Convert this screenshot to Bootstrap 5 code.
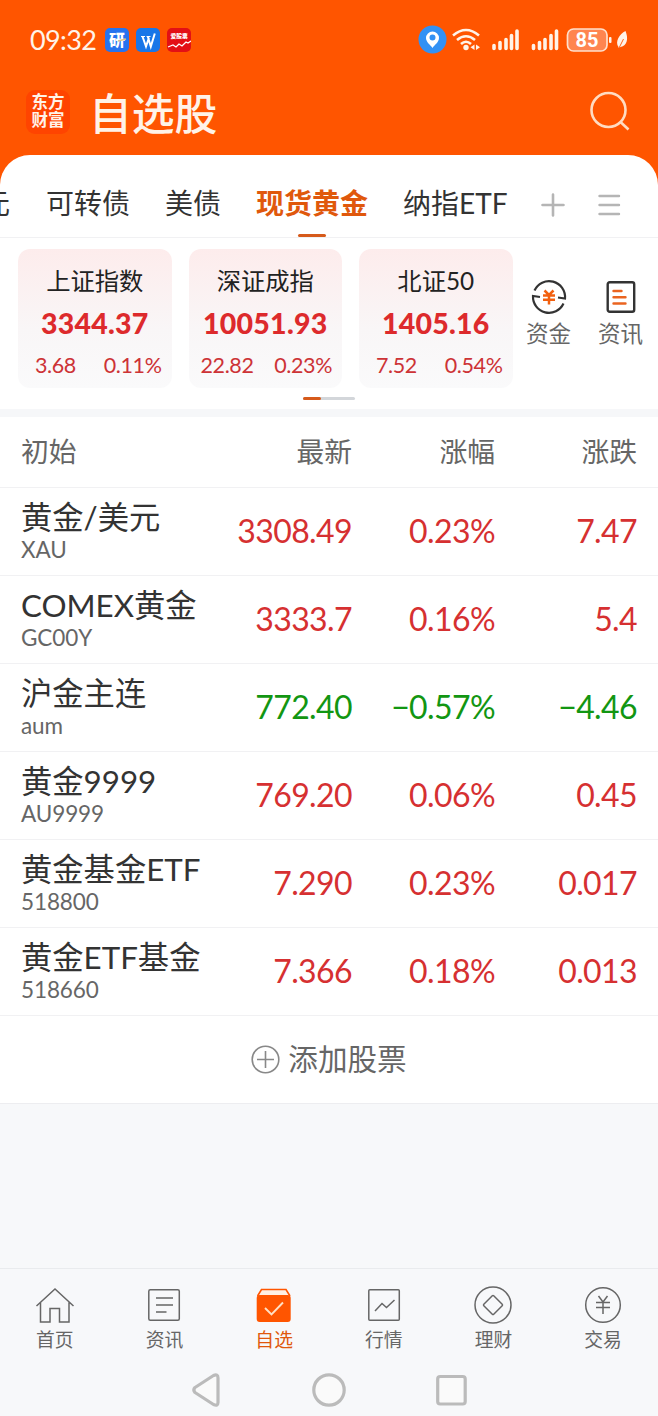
<!DOCTYPE html>
<html lang="zh-CN">
<head>
<meta charset="utf-8">
<meta name="viewport" content="width=device-width, initial-scale=1">
<title>自选股</title>
<link href="https://cdn.jsdelivr.net/npm/bootstrap@5.3.0/dist/css/bootstrap.min.css" rel="stylesheet">
<style>
  body { font-family: Lato, "Noto Sans CJK SC", sans-serif; background: #f7f8fa; color: #333; width: 658px; height: 1416px; overflow: hidden; }
  svg { display: block; flex: none; }
  .app-head { background: #ff5500; height: 189px; color: #fff3e8; }
  .status { height: 79px; padding: 0 29px 0 30px; }
  .clock { font-size: 27px; line-height: 30px; width: 75px; letter-spacing: -.6px; }
  .app-icon { width: 24px; height: 24px; border-radius: 5px; overflow: hidden; margin-right: 7px; }
  .title-row { height: 66px; padding: 0 27px 0 26px; }
  .logo { width: 44px; height: 44px; border-radius: 9px; background: #ff4400; font-size: 16.5px; line-height: 18px; font-weight: 700; text-align: center; padding-top: 3px; }
  .page-title { font-size: 42.8px; line-height: 60px; font-weight: 500; margin-left: 19px; padding-top: 4px; }
  .sheet { margin-top: -34px; border-radius: 30px 30px 0 0; background: #fff; overflow: hidden; }
  .tabs { height: 83px; border-bottom: 1px solid #f1f1f3; white-space: nowrap; font-size: 28px; line-height: 40px; padding-top: 28px; }
  .tabs .cut { width: 46px; text-indent: -18px; }
  .tabs svg { margin-top: 9px; }
  .current { color: #e0580c; font-weight: 700; }
  .current::after { content: ""; position: absolute; left: 42px; bottom: 0; width: 28px; height: 3px; border-radius: 2px; background: #d65a1b; }
  .indices { height: 171px; padding-top: 11px; }
  .quote-box { width: 153.5px; height: 139px; border-radius: 12px; margin-right: 17px; background: linear-gradient(#fdecec, #f9f6f7 58%, #fafafb); padding-top: 15px; text-align: center; }
  .q-name { font-size: 24.3px; line-height: 34px; color: #222; }
  .q-val { font-size: 28.5px; line-height: 34px; margin-top: 8px; font-weight: 900; color: #dd2a2c; letter-spacing: .25px; }
  .q-sub { font-size: 21.5px; line-height: 28px; margin-top: 11px; padding: 0 10px 0 17px; color: #cd3336; letter-spacing: -.4px; }
  .tool { width: 72px; padding-top: 30px; color: #666; font-size: 22.5px; line-height: 32px; }
  .tool svg { margin-bottom: 3px; }
  .pager { width: 52px; height: 3px; margin: 9px 0 0 303px; background: #d3d6da; border-radius: 2px; }
  .pager span { display: block; width: 18px; height: 3px; border-radius: 2px; background: #d65a1b; }
  .band { height: 8px; background: #f6f7f9; }
  .q-row { height: 88px; padding: 0 21px; border-bottom: 1px solid #f1f1f3; }
  .q-row.th { height: 71px; font-size: 27.8px; line-height: 40px; color: #666; }
  .c1 { width: 191px; }
  .c2 { width: 140px; text-align: right; }
  .c3 { width: 143px; text-align: right; }
  .c4 { width: 142px; text-align: right; }
  .stock { font-size: 31.3px; line-height: 40px; white-space: nowrap; }
  .code { font-size: 22.5px; line-height: 26px; color: #666; letter-spacing: -.1px; margin-bottom: 3px; }
  .num { font-size: 32px; line-height: 40px; color: #d63031; letter-spacing: -.6px; padding-bottom: 2px; }
  .num.down { color: #129612; }
  .add { height: 88px; border-bottom: 1px solid #ededf0; color: #666; font-size: 29.6px; line-height: 40px; padding-bottom: 1px; }
  .tabbar { margin-top: 164px; height: 84px; border-top: 1px solid #e9ebee; color: #666; font-size: 18.8px; line-height: 26px; padding-top: 16px; }
  .tabbar svg { margin: 0 0 2px; }
  .tabbar .on { color: #e0580c; }
  .sys { height: 64px; }
</style>
</head>
<body>
<header class="app-head">
  <div class="status d-flex align-items-center">
    <div class="clock">09:32</div>
    <svg class="app-icon" viewBox="0 0 24 24"><rect width="24" height="24" fill="#2673ee"/><text x="4" y="17.5" font-size="16" font-weight="900" fill="#fff">研</text><path d="M13 13l8-2" stroke="#d9c184" stroke-width="1.5"/></svg>
    <svg class="app-icon" viewBox="0 0 24 24"><rect width="24" height="24" fill="#1876e8"/><path d="M5 8.500h4M10.500 8.500h4" fill="none" stroke="#fff" stroke-width="1.200"/><path d="M6.500 8.500l3.500 10 3-9M11.800 8.500l3 10 4-13" fill="none" stroke="#fff" stroke-width="2"/></svg>
    <svg class="app-icon" viewBox="0 0 24 24"><rect width="24" height="24" fill="#e31015"/><text x="3.500" y="10" font-size="5.800" font-weight="900" fill="#fff">爱股票</text><path d="M1 19l5-2 3 2 3-3 3 2 4-4 2 1 3-2" fill="none" stroke="#fff" stroke-width="1.300"/></svg>
    <svg class="ms-auto" width="212" height="30" viewBox="417 25 212 30" fill="#fff3e8">
      <circle cx="432.500" cy="39.500" r="14" fill="#3291f4"/>
      <path fill-rule="evenodd" d="M432.500 48c-2-3-6.500-6-6.500-10a6.500 6.500 0 0 1 13 0c0 4-4.500 7-6.500 10zm0-7.500a3 3 0 1 0 0-6 3 3 0 0 0 0 6z" fill="#fff"/>
      <g fill="none" stroke="#fff3e8" stroke-width="2.600"><path d="M453 35.500q13-11 26 0M457 40q9-7.500 18 0M461 44q5-4.500 10 0"/></g>
      <circle cx="466" cy="47.500" r="2.700"/><path d="M474.500 44.500v5.500l-4-2.700zM476 44.500v5.500l4-2.700z"/>
      <g stroke="#fff3e8" stroke-width="3.600" stroke-linecap="round"><path d="M494 45.500v3M500 42.500v6M506 39.500v9M511.500 35.500v13M517 31v17.500M533.500 45.500v3M539.500 42.500v6M545 39.500v9M551 35.500v13M556.500 31v17.500"/></g>
      <rect x="567.500" y="29" width="39.500" height="22" rx="6" fill="#ff8550" stroke="#ffe0cc" stroke-width="1.700"/>
      <text x="587" y="47.300" text-anchor="middle" font-family="Roboto" font-size="20" font-weight="700" fill="#fff">85</text>
      <rect x="609" y="37" width="2.500" height="6" rx="1"/>
      <path d="M625.500 31c3 7 2 15-5 16l-2 1v-1c-4-5 1-13 7-16z"/><path d="M619 48l4.500-9" stroke="#ff5500" stroke-width=".9" fill="none"/>
    </svg>
  </div>
  <div class="title-row d-flex align-items-center">
    <div class="logo">东方<br>财富</div>
    <div class="page-title">自选股</div>
    <svg class="ms-auto" width="42" height="42" viewBox="0 0 42 42" fill="none" stroke="#ffdcc2" stroke-width="2.600"><circle cx="19.500" cy="19" r="17"/><path d="M31.500 31l8 7.500"/></svg>
  </div>
</header>
<main class="sheet position-relative">
  <nav class="tabs d-flex">
    <div class="cut">元</div>
    <div style="width:119px">可转债</div>
    <div style="width:91px">美债</div>
    <div class="current position-relative" style="width:147px">现货黄金</div>
    <div style="width:138px">纳指ETF</div>
    <svg width="24" height="26" viewBox="0 0 24 26" stroke="#b5b5b5" stroke-width="2.600" stroke-linecap="round"><path d="M1.500 13h21M12 2.500v21"/></svg>
    <svg class="ms-1" width="80" height="26" viewBox="-28 0 80 26" stroke="#b5b5b5" stroke-width="2.400" stroke-linecap="round"><path d="M2.500 4h19.500M2.500 13h19.500M2.500 22h19.500"/></svg>
  </nav>
  <section class="indices">
    <div class="d-flex" style="padding-left:18px">
      <div class="quote-box"><div class="q-name">上证指数</div><div class="q-val">3344.37</div><div class="q-sub d-flex justify-content-between"><span>3.68</span><span>0.11%</span></div></div>
      <div class="quote-box"><div class="q-name">深证成指</div><div class="q-val">10051.93</div><div class="q-sub d-flex justify-content-between" style="padding-left:12px"><span>22.82</span><span>0.23%</span></div></div>
      <div class="quote-box me-0"><div class="q-name">北证50</div><div class="q-val">1405.16</div><div class="q-sub d-flex justify-content-between"><span>7.52</span><span>0.54%</span></div></div>
      <div class="tool d-flex flex-column align-items-center">
        <svg width="36" height="36" viewBox="0 0 36 36" fill="none" stroke="#333" stroke-width="2.200"><path d="M3.500 11.500A16 16 0 0 1 34 19.500l-7-1M32.500 24.500A16 16 0 0 1 2 17l7 1"/><path d="M13.500 11.500l4.500 4.500 4.500-4.500M12 16.500h12M12 20.700h12M18 16v9.500" stroke="#f2600f" stroke-width="2.500"/></svg>资金</div>
      <div class="tool d-flex flex-column align-items-center">
        <svg width="36" height="36" viewBox="0 0 36 36" fill="none" stroke="#333" stroke-width="2.400"><rect x="4.700" y="3.200" width="26.500" height="29.500" rx="2"/><path d="M10.500 12h8M10.500 18.200h12M10.500 24.500h12" stroke="#ea6420" stroke-linecap="round"/></svg>资讯</div>
    </div>
    <div class="pager"><span></span></div>
  </section>
  <div class="band"></div>
  <section>
    <div class="q-row th d-flex align-items-center"><div class="c1">初始</div><div class="c2">最新</div><div class="c3">涨幅</div><div class="c4">涨跌</div></div>
    <div class="q-row d-flex align-items-center"><div class="c1"><div class="stock">黄金/美元</div><div class="code">XAU</div></div><div class="num c2">3308.49</div><div class="num c3">0.23%</div><div class="num c4">7.47</div></div>
    <div class="q-row d-flex align-items-center"><div class="c1"><div class="stock">COMEX黄金</div><div class="code">GC00Y</div></div><div class="num c2">3333.7</div><div class="num c3">0.16%</div><div class="num c4">5.4</div></div>
    <div class="q-row d-flex align-items-center"><div class="c1"><div class="stock">沪金主连</div><div class="code">aum</div></div><div class="num down c2">772.40</div><div class="num down c3">−0.57%</div><div class="num down c4">−4.46</div></div>
    <div class="q-row d-flex align-items-center"><div class="c1"><div class="stock">黄金9999</div><div class="code">AU9999</div></div><div class="num c2">769.20</div><div class="num c3">0.06%</div><div class="num c4">0.45</div></div>
    <div class="q-row d-flex align-items-center"><div class="c1"><div class="stock">黄金基金ETF</div><div class="code">518800</div></div><div class="num c2">7.290</div><div class="num c3">0.23%</div><div class="num c4">0.017</div></div>
    <div class="q-row d-flex align-items-center"><div class="c1"><div class="stock">黄金ETF基金</div><div class="code">518660</div></div><div class="num c2">7.366</div><div class="num c3">0.18%</div><div class="num c4">0.013</div></div>
    <div class="add d-flex align-items-center justify-content-center"><svg class="me-2" width="29" height="29" viewBox="0 0 29 29" fill="none" stroke="#888" stroke-width="1.600"><circle cx="14.500" cy="14.500" r="13.300"/><path d="M6 14.500h17M14.500 6v17"/></svg>添加股票</div>
  </section>
</main>
<nav class="tabbar d-flex text-center">
  <div class="col-2 d-flex flex-column align-items-center"><svg width="40" height="40" viewBox="0 0 40 40" fill="none" stroke="#666" stroke-width="1.500"><path d="M1.500 21L20 4l18.500 17M5.500 17.500V37H15V23.500h9.500V37H34V17.500"/></svg>首页</div>
  <div class="col-2 d-flex flex-column align-items-center"><svg width="40" height="40" viewBox="0 0 40 40" fill="none" stroke="#666" stroke-width="1.500"><rect x="4.800" y="4.800" width="30.500" height="30.500" rx="1.500"/><path d="M12 13h17M12 20h17M12 27h10.500"/></svg>资讯</div>
  <div class="col-2 on d-flex flex-column align-items-center"><svg width="40" height="40" viewBox="0 0 40 40" fill="none" stroke="#ff5500" stroke-width="1.600"><path d="M3.500 11l4-6.500h24.500l4 6.500" fill="#fff0e3"/><rect x="2.700" y="10" width="34" height="27" rx="3" fill="#ff5500" stroke="none"/><path d="M11 23l6.500 6.500L29 17.500" stroke="#ffe0c5" stroke-width="1.900"/></svg>自选</div>
  <div class="col-2 d-flex flex-column align-items-center"><svg width="40" height="40" viewBox="0 0 40 40" fill="none" stroke="#666" stroke-width="1.500"><rect x="4.800" y="4.800" width="30.500" height="30.500" rx="1"/><path d="M11 26l7-7.500 4.500 4L30.500 15"/></svg>行情</div>
  <div class="col-2 d-flex flex-column align-items-center"><svg width="40" height="40" viewBox="0 0 40 40" fill="none" stroke="#666" stroke-width="1.500"><circle cx="20" cy="20" r="18"/><rect x="13" y="13" width="14" height="14" rx="1" transform="rotate(45 20 20)"/></svg>理财</div>
  <div class="col-2 d-flex flex-column align-items-center"><svg width="40" height="40" viewBox="0 0 40 40" fill="none" stroke="#666" stroke-width="1.500"><circle cx="20" cy="20" r="17.300"/><path d="M15.500 11l4.500 6 4.500-6M13 17.500h14M13 22.500h14M20 17v12"/></svg>交易</div>
</nav>
<div class="sys">
  <svg width="658" height="64" viewBox="0 0 658 64" fill="#fafafa" stroke="#bbb" stroke-width="3.200" stroke-linejoin="round"><path d="M195 35.500Q192.500 38 195 40.500L213.500 52.500Q218 54.500 218 50.500V26Q218 21.500 213.500 23.500Z"/><circle cx="329" cy="38" r="15.200"/><rect x="437.700" y="24.500" width="27.500" height="27.500" rx="2.500"/></svg>
</div>
<script src="https://cdn.jsdelivr.net/npm/bootstrap@5.3.0/dist/js/bootstrap.bundle.min.js"></script>
</body>
</html>
